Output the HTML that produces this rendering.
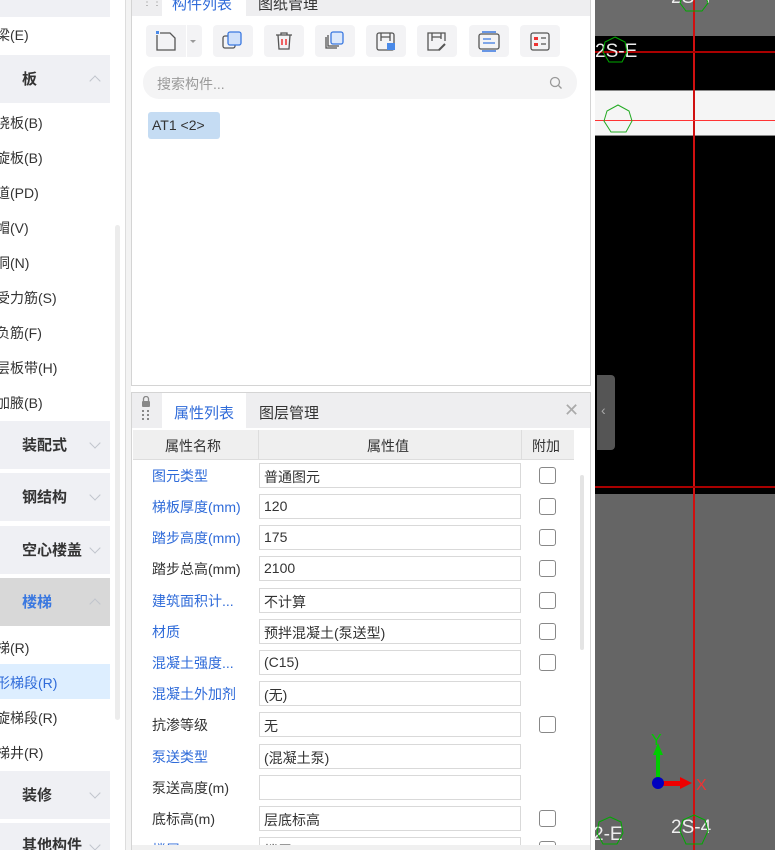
<!DOCTYPE html>
<html><head><meta charset="utf-8"><style>
*{margin:0;padding:0;box-sizing:border-box}
html,body{width:775px;height:850px;overflow:hidden}
body{position:relative;background:#fff;font-family:"Liberation Sans","Noto Sans CJK SC",sans-serif;font-size:14px;color:#333}
.a{position:absolute}
.li{position:absolute;left:-4px;font-size:14px;color:#333;white-space:nowrap}
.hd{position:absolute;left:0;width:110px;height:48px;background:#eff0f4}
.hd span{position:absolute;left:22px;top:13px;font-weight:bold;font-size:15px;color:#333}
.hd i{position:absolute;left:91px;top:22px;width:8px;height:8px;border-left:1.3px solid #c0c4cc;border-top:1.3px solid #c0c4cc;transform:rotate(45deg)}
.hd i.d{transform:rotate(225deg);top:18px}
.btn{position:absolute;top:25px;width:40px;height:32px;background:#f3f3f5;border-radius:4px}
.row{position:absolute;left:133px;width:445px;height:31px}
.row .n{position:absolute;left:19px;top:6px;font-size:14px;color:#333;white-space:nowrap}
.row .n.b{color:#2f6bd9}
.row .v{position:absolute;left:126px;top:3px;width:262px;height:25px;border:1px solid #d9d9d9;padding:3px 4px;font-size:14px}
.row .c{position:absolute;left:406px;top:7px;width:17px;height:17px;border:1.3px solid #888;border-radius:3px}
.lbl{position:absolute;color:#eee;font-size:19px}
</style></head><body>
<div class="a" style="left:0;top:0;width:125px;height:850px;background:#fff"></div>
<div class="hd" style="top:-18px;height:35px"></div>
<div class="li" style="top:25px">梁(E)</div>
<div class="hd" style="top:55px"><span>板</span><i></i></div>
<div class="li" style="top:113px">浇板(B)</div>
<div class="li" style="top:148px">旋板(B)</div>
<div class="li" style="top:183px">道(PD)</div>
<div class="li" style="top:218px">帽(V)</div>
<div class="li" style="top:253px">洞(N)</div>
<div class="li" style="top:288px">受力筋(S)</div>
<div class="li" style="top:323px">负筋(F)</div>
<div class="li" style="top:358px">层板带(H)</div>
<div class="li" style="top:393px">加腋(B)</div>
<div class="hd" style="top:421px"><span>装配式</span><i class="d"></i></div>
<div class="hd" style="top:473px"><span>钢结构</span><i class="d"></i></div>
<div class="hd" style="top:526px"><span>空心楼盖</span><i class="d"></i></div>
<div class="hd" style="top:578px;background:#d8d8d8"><span style="color:#3a78e0">楼梯</span><i></i></div>
<div class="li" style="top:638px">梯(R)</div>
<div class="a" style="left:0;top:664px;width:110px;height:35px;background:#ddeeff"></div>
<div class="li" style="top:673px;color:#2f6bd9">形梯段(R)</div>
<div class="li" style="top:708px">旋梯段(R)</div>
<div class="li" style="top:743px">梯井(R)</div>
<div class="hd" style="top:771px"><span>装修</span><i class="d"></i></div>
<div class="hd" style="top:823px"><span style="top:11px">其他构件</span><i class="d"></i></div>
<div class="a" style="left:115px;top:225px;width:5px;height:495px;background:#ececec;border-radius:3px"></div>
<div class="a" style="left:125px;top:0;width:1px;height:850px;background:#ddd"></div>
<div class="a" style="left:126px;top:0;width:5px;height:850px;background:#f3f3f3"></div>

<div class="a" style="left:131px;top:0;width:460px;height:386px;border:1px solid #d4d4d4;background:#fff"></div>
<div class="a" style="left:132px;top:0;width:458px;height:16px;background:#eeeef0"></div>
<div class="a" style="left:162px;top:0;width:84px;height:16px;background:#fff"></div>
<div class="a" style="left:172px;top:-7px;color:#2f6bd9;font-size:15px">构件列表</div>
<div class="a" style="left:258px;top:-7px;color:#333;font-size:15px">图纸管理</div>
<div class="a" style="left:142px;top:0;color:#888;font-size:10px;line-height:6px">⋮⋮</div>

<div class="btn" style="left:146px;width:56px"><svg width="56" height="32"><rect x="10" y="6" width="3" height="3" fill="#4a8ae8"/><path d="M11 10v15h18V13l-5-5h-10" fill="none" stroke="#555" stroke-width="1.3"/><rect x="40" y="0" width="1" height="32" fill="#fff"/><path d="M44 15l3 3 3-3z" fill="#999"/></svg></div>
<div class="btn" style="left:213px"><svg width="40" height="32"><rect x="10" y="11" width="12" height="12" rx="2" fill="none" stroke="#555" stroke-width="1.3"/><rect x="15" y="7" width="13" height="13" rx="2" fill="#cfe0fa" stroke="#3a78e0" stroke-width="1.3"/></svg></div>
<div class="btn" style="left:264px"><svg width="40" height="32"><path d="M12 10h16M17 10V8h6v2M14 10l1 14h10l1-14" fill="none" stroke="#555" stroke-width="1.3"/><path d="M18 14v6M22 14v6" stroke="#e33" stroke-width="1.5"/></svg></div>
<div class="btn" style="left:315px"><svg width="40" height="32"><path d="M11 12v11h11" fill="none" stroke="#555" stroke-width="1.3"/><path d="M13 10v11h11" fill="none" stroke="#555" stroke-width="1.3"/><rect x="16" y="7" width="12" height="12" rx="2" fill="#dde9fb" stroke="#3a78e0" stroke-width="1.3"/></svg></div>
<div class="btn" style="left:366px"><svg width="40" height="32"><rect x="11" y="8" width="17" height="17" rx="2" fill="none" stroke="#555" stroke-width="1.3"/><path d="M15 8v8M15 12h9M24 8v8" fill="none" stroke="#555" stroke-width="1.3"/><rect x="21" y="18" width="8" height="7" fill="#4a8ae8"/></svg></div>
<div class="btn" style="left:417px"><svg width="40" height="32"><path d="M28 16V8H11v17h12" fill="none" stroke="#555" stroke-width="1.3"/><path d="M15 8v8M15 12h9M24 8v6" fill="none" stroke="#555" stroke-width="1.3"/><path d="M22 25l6-6" stroke="#555" stroke-width="2"/></svg></div>
<div class="btn" style="left:469px"><svg width="40" height="32"><rect x="10" y="9" width="20" height="15" rx="2" fill="none" stroke="#555" stroke-width="1.3"/><path d="M13 7h14M13 26h14" stroke="#3a78e0" stroke-width="1.5"/><path d="M14 14h8M14 18h12" stroke="#3a78e0" stroke-width="1.3"/></svg></div>
<div class="btn" style="left:520px"><svg width="40" height="32"><rect x="11" y="8" width="18" height="17" rx="2" fill="none" stroke="#555" stroke-width="1.3"/><rect x="14" y="12" width="4" height="3" fill="#e33"/><rect x="14" y="18" width="4" height="3" fill="#e33"/><path d="M21 13h5M21 19h5" stroke="#555" stroke-width="1.3"/></svg></div>

<div class="a" style="left:143px;top:66px;width:434px;height:33px;background:#f4f4f5;border-radius:16px"></div>
<div class="a" style="left:157px;top:74px;color:#999;font-size:14px">搜索构件...</div>
<svg class="a" style="left:549px;top:76px" width="14" height="14"><circle cx="6" cy="6" r="4.5" fill="none" stroke="#999" stroke-width="1.3"/><path d="M9.5 9.5l3 3" stroke="#999" stroke-width="1.3"/></svg>
<div class="a" style="left:148px;top:112px;width:72px;height:27px;background:#c5dcf3;border-radius:3px;padding:5px 0 0 4px;font-size:14px;color:#333">AT1 &lt;2&gt;</div>

<div class="a" style="left:131px;top:392px;width:460px;height:458px;border:1px solid #d4d4d4;background:#fff"></div>
<div class="a" style="left:132px;top:393px;width:458px;height:35px;background:#eeeef0"></div>
<div class="a" style="left:162px;top:393px;width:84px;height:35px;background:#fff"></div>
<div class="a" style="left:174px;top:402px;color:#2f6bd9;font-size:15px">属性列表</div>
<div class="a" style="left:259px;top:402px;color:#333;font-size:15px">图层管理</div>
<svg class="a" style="left:140px;top:396px" width="12" height="30"><rect x="2" y="5" width="8" height="6" rx="1" fill="#888"/><path d="M3.5 5V3a2.5 2.5 0 015 0v2" fill="none" stroke="#888" stroke-width="1.3"/><g fill="#888"><rect x="2" y="14" width="2" height="2"/><rect x="7" y="14" width="2" height="2"/><rect x="2" y="18" width="2" height="2"/><rect x="7" y="18" width="2" height="2"/><rect x="2" y="22" width="2" height="2"/><rect x="7" y="22" width="2" height="2"/></g></svg>
<div class="a" style="left:564px;top:400px;color:#aaa;font-size:18px">✕</div>
<div class="a" style="left:133px;top:430px;width:441px;height:30px;background:#efefef;border-bottom:1px solid #ddd"></div>
<div class="a" style="left:258px;top:430px;width:1px;height:30px;background:#ddd"></div>
<div class="a" style="left:521px;top:430px;width:1px;height:30px;background:#ddd"></div>
<div class="a" style="left:165px;top:436px;font-size:14px">属性名称</div>
<div class="a" style="left:367px;top:436px;font-size:14px">属性值</div>
<div class="a" style="left:532px;top:436px;font-size:14px">附加</div>
<div class="a" style="left:580px;top:475px;width:4px;height:175px;background:#e4e4e4;border-radius:2px"></div>

<div class="row" style="top:460px"><div class="n b">图元类型</div><div class="v">普通图元</div><div class="c"></div></div>
<div class="row" style="top:491px"><div class="n b">梯板厚度(mm)</div><div class="v">120</div><div class="c"></div></div>
<div class="row" style="top:522px"><div class="n b">踏步高度(mm)</div><div class="v">175</div><div class="c"></div></div>
<div class="row" style="top:553px"><div class="n">踏步总高(mm)</div><div class="v">2100</div><div class="c"></div></div>
<div class="row" style="top:585px"><div class="n b">建筑面积计...</div><div class="v">不计算</div><div class="c"></div></div>
<div class="row" style="top:616px"><div class="n b">材质</div><div class="v">预拌混凝土(泵送型)</div><div class="c"></div></div>
<div class="row" style="top:647px"><div class="n b">混凝土强度...</div><div class="v">(C15)</div><div class="c"></div></div>
<div class="row" style="top:678px"><div class="n b">混凝土外加剂</div><div class="v">(无)</div></div>
<div class="row" style="top:709px"><div class="n">抗渗等级</div><div class="v">无</div><div class="c"></div></div>
<div class="row" style="top:741px"><div class="n b">泵送类型</div><div class="v">(混凝土泵)</div></div>
<div class="row" style="top:772px"><div class="n">泵送高度(m)</div><div class="v"></div></div>
<div class="row" style="top:803px"><div class="n">底标高(m)</div><div class="v">层底标高</div><div class="c"></div></div>
<div class="row" style="top:834px"><div class="n b">楼层</div><div class="v">楼层</div><div class="c"></div></div>
<div class="a" style="left:132px;top:845px;width:458px;height:5px;background:#f0f0f0"></div>

<div class="a" style="left:591px;top:0;width:4px;height:850px;background:#fff"></div>
<div class="a" style="left:595px;top:0;width:180px;height:850px;background:#000"></div>
<div class="a" style="left:595px;top:0;width:180px;height:36px;background:#6b6b6b"></div>
<div class="a" style="left:595px;top:90px;width:180px;height:46px;background:#f5f5f5;border-top:1px solid #888;border-bottom:1px solid #888"></div>
<div class="a" style="left:595px;top:494px;width:180px;height:356px;background:#656565"></div>
<div class="a" style="left:693px;top:0;width:2px;height:850px;background:#d01010"></div>
<div class="a" style="left:595px;top:51px;width:180px;height:2px;background:#a00"></div>
<div class="a" style="left:595px;top:120px;width:180px;height:1px;background:#f33"></div>
<div class="a" style="left:595px;top:486px;width:180px;height:2px;background:#a00"></div>
<div class="lbl" style="left:671px;top:-13px">2S-4</div>
<svg class="a" style="left:678px;top:-10px" width="32" height="24"><polygon points="16,0 27,5 30,13 24,21 8,21 2,13 5,5" fill="none" stroke="#0a0" stroke-width="1"/></svg>
<div class="lbl" style="left:595px;top:41px">2S-E</div>
<svg class="a" style="left:600px;top:36px" width="32" height="32"><polygon points="15,1 25,6 27,16 22,26 9,26 3,16 5,6" fill="none" stroke="#0a0" stroke-width="1"/></svg>
<svg class="a" style="left:602px;top:104px" width="32" height="32"><polygon points="16,1 27,7 30,17 24,28 9,28 2,17 5,7" fill="none" stroke="#2a2" stroke-width="1"/></svg>
<div class="a" style="left:597px;top:375px;width:18px;height:75px;background:#555;border-radius:0 4px 4px 0;color:#aaa;font-size:14px;padding:27px 0 0 4px">‹</div>
<svg class="a" style="left:648px;top:727px" width="75" height="64"><text x="3" y="18" fill="#0c0" font-size="16" font-family="Liberation Sans">Y</text><rect x="8" y="27" width="4" height="24" fill="#0c0"/><path d="M10 16l-5 12h10z" fill="#0c0"/><rect x="14" y="54" width="20" height="5" fill="#e00"/><path d="M32 50l12 6-12 6z" fill="#e00"/><text x="48" y="63" fill="#e33" font-size="16" font-family="Liberation Sans">X</text><circle cx="10" cy="56" r="6" fill="#0000c0"/></svg>
<div class="lbl" style="left:593px;top:824px">2-E</div>
<svg class="a" style="left:595px;top:816px" width="30" height="34"><polygon points="15,1 26,6 28,17 22,28 8,28 2,17 4,6" fill="none" stroke="#0a0" stroke-width="1"/></svg>
<div class="lbl" style="left:671px;top:817px">2S-4</div>
<svg class="a" style="left:678px;top:814px" width="32" height="36"><polygon points="16,1 27,6 30,17 24,30 8,30 2,17 5,6" fill="none" stroke="#0a0" stroke-width="1"/></svg>
</body></html>
